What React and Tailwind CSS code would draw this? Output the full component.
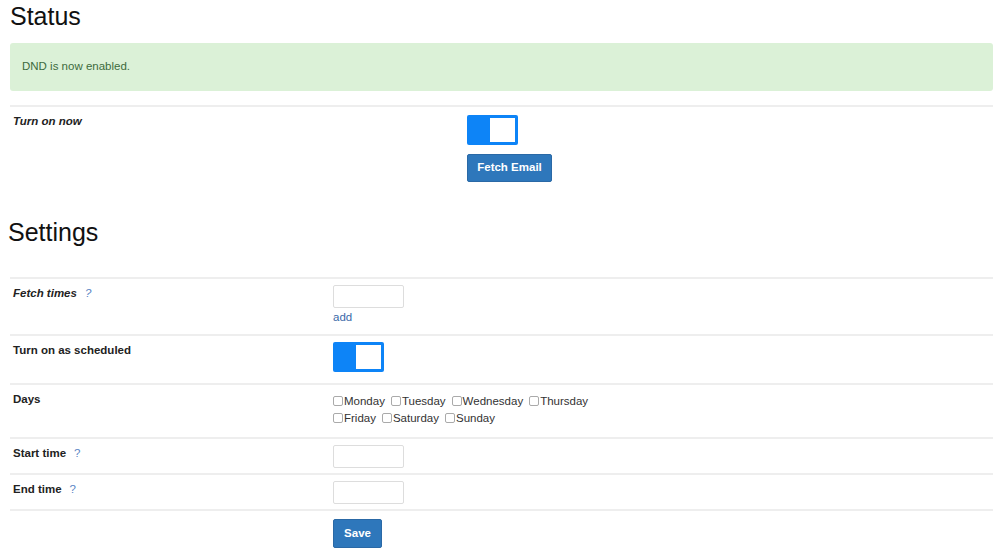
import React, { useState } from 'react';

const Toggle = ({ on = true }) => (
  <div className="w-[51px] h-[30px] bg-[#0d84f7] rounded-[2px] p-[3px] flex justify-end">
    <div className="w-[25px] h-full bg-white" />
  </div>
);

const Help = () => <span className="ml-2 text-[#5a84c4] font-normal">?</span>;

const Row = ({ label, children, italic, labelWidth }) => (
  <div className="flex border-t-2 border-[#eeeeee] pl-[3px] pt-[6px] pb-[5px]">
    <div className={`${labelWidth} shrink-0 text-[11.5px] leading-[16px] font-bold text-[#222] ${italic ? 'italic' : ''}`}>
      {label}
    </div>
    <div className="flex-1">{children}</div>
  </div>
);

const Days = () => {
  const first = ['Monday', 'Tuesday', 'Wednesday', 'Thursday'];
  const second = ['Friday', 'Saturday', 'Sunday'];
  const Box = ({ d }) => (
    <label className="flex items-center mr-[6px] text-[11.5px] leading-[16px] text-[#333]">
      <input type="checkbox" className="w-[10px] h-[10px] m-0 mr-[1px] appearance-none border border-[#aaa] rounded-[2px] bg-white" />
      {d}
    </label>
  );
  return (
    <div className="flex flex-col gap-[1px] pt-[2px] pb-[6px]">
      <div className="flex">{first.map((d) => <Box key={d} d={d} />)}</div>
      <div className="flex">{second.map((d) => <Box key={d} d={d} />)}</div>
    </div>
  );
};

const TextBox = () => (
  <div className="w-[71px] h-[23px] border border-[#dddddd] rounded-[2px] bg-white" />
);

export default function App() {
  const [email] = useState('');
  return (
    <div className="w-[1000px] h-[560px] bg-white px-[10px] pr-[7px] font-['Liberation_Sans',Arial,sans-serif] text-[#222] overflow-hidden">
      <h1 className="text-[25px] leading-[30px] pt-[1px] text-[#111]">Status</h1>
      <div className="mt-[12px] h-[48px] bg-[#dbf1d7] rounded-[3px] px-[12px] flex items-center text-[11.5px] text-[#3d6b3d]">
        DND is now enabled.
      </div>
      <div className="mt-[14px]">
        <Row label="Turn on now" italic labelWidth="w-[454px]">
          <div className="flex flex-col gap-[9px] pt-[2px]">
            <Toggle />
            <button className="w-[85px] h-[28px] bg-[#2e77bb] border border-[#2a69a6] rounded-[2px] text-white text-[11.5px] font-bold">
              Fetch Email
            </button>
          </div>
        </Row>
      </div>
      <h1 className="text-[25px] leading-[30px] mt-[30px] -ml-[2px] text-[#111]">Settings</h1>
      <div className="mt-[30px] [&>div:last-child]:border-b-2 [&>div:last-child]:border-[#eeeeee]">
        <Row label={<>Fetch times<Help /></>} italic labelWidth="w-[320px]">
          <TextBox />
          <a className="block text-[11.5px] leading-[16px] text-[#3a69a8] mt-[1px] mb-[4px]">add</a>
        </Row>
        <Row label="Turn on as scheduled" labelWidth="w-[320px]">
          <div className="pb-[6px]"><Toggle /></div>
        </Row>
        <Row label="Days" labelWidth="w-[320px]">
          <Days />
        </Row>
        <Row label={<>Start time<Help /></>} labelWidth="w-[320px]">
          <TextBox />
        </Row>
        <Row label={<>End time<Help /></>} labelWidth="w-[320px]">
          <TextBox />
        </Row>
      </div>
      <div className="pl-[323px] pt-[8px]">
        <button className="w-[49px] h-[29px] bg-[#2e77bb] border border-[#2a69a6] rounded-[2px] text-white text-[11.5px] font-bold">
          Save
        </button>
      </div>
    </div>
  );
}
